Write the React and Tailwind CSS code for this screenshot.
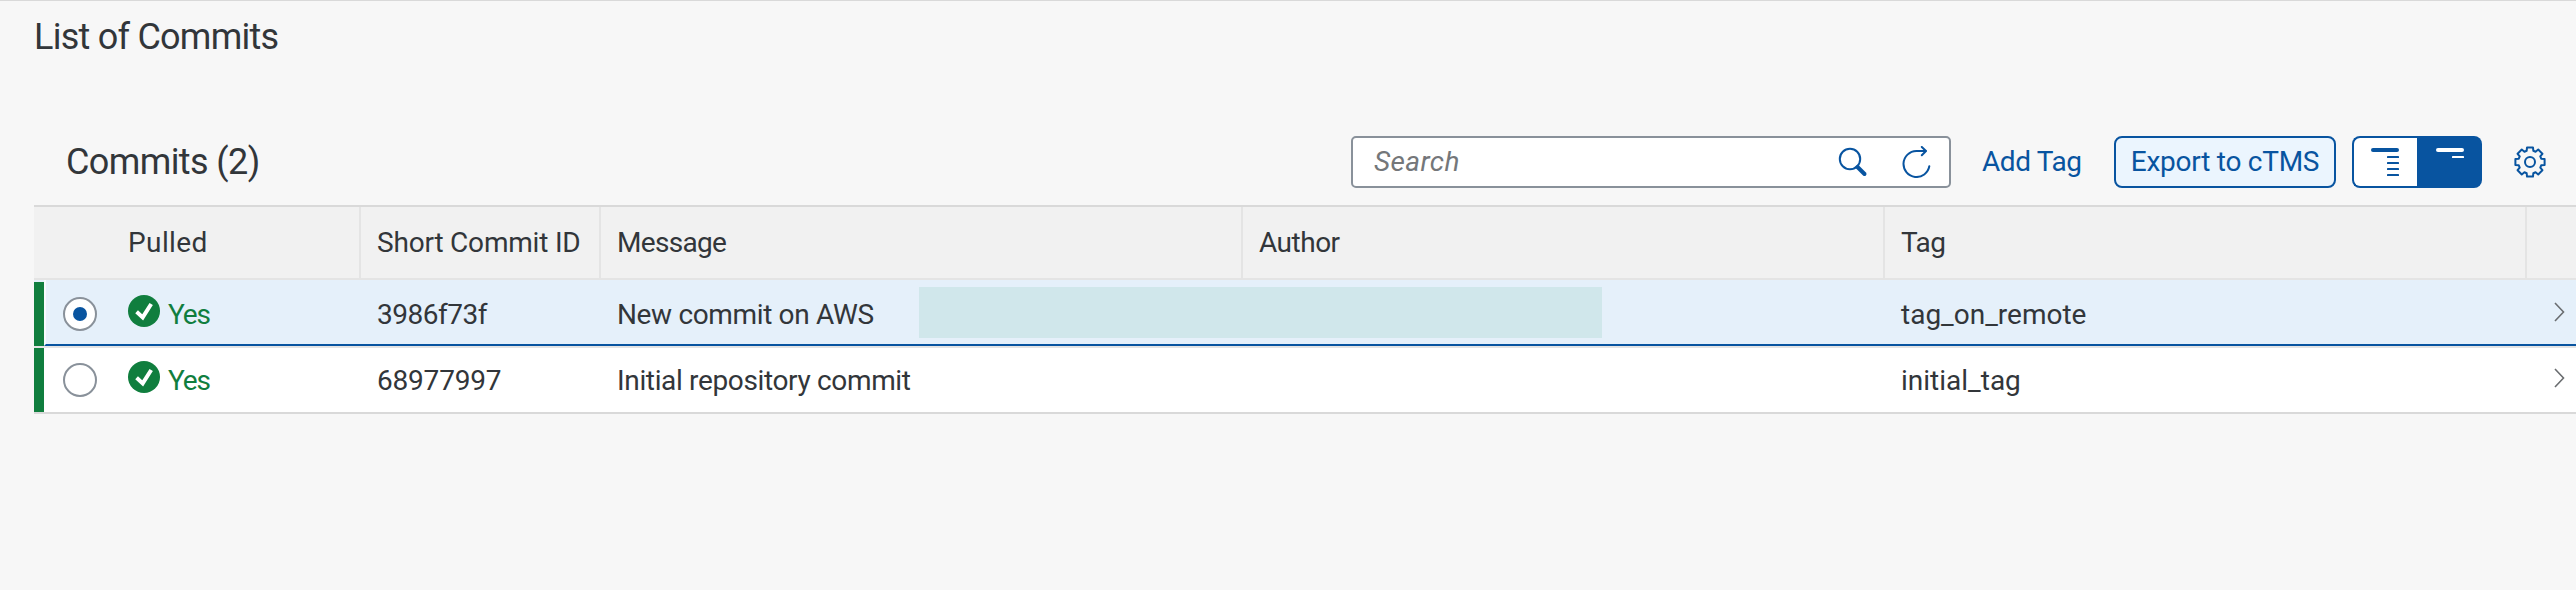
const COLUMNS =
  "grid grid-cols-[10px_68px_249px_240px_642px_642px_642px_49px] items-stretch";

const commits = [
  {
    id: "3986f73f",
    idTracking: "tracking-[-0.5px]",
    message: "New commit on AWS",
    tag: "tag_on_remote",
    selected: true,
  },
  {
    id: "68977997",
    idTracking: "tracking-[-0.2px]",
    message: "Initial repository commit",
    tag: "initial_tag",
    selected: false,
  },
];

function SearchIcon() {
  return (
    <svg className="size-8" viewBox="0 0 32 32" fill="none" stroke="#0854a0" strokeLinecap="round">
      <circle cx="14" cy="13" r="10.2" strokeWidth="2" />
      <path d="M21.5 21L28.5 28" strokeWidth="4" />
    </svg>
  );
}

function RefreshIcon() {
  return (
    <svg
      className="size-8"
      viewBox="0 0 32 32"
      fill="none"
      stroke="#0854a0"
      strokeWidth="2"
      strokeLinecap="round"
      strokeLinejoin="round"
    >
      <path d="M29.3 20.3A13 13 0 1 1 16.4 5H25.5" />
      <path d="M21.8 1L26 5L21.8 9.2" />
    </svg>
  );
}

function gearPath() {
  const points = [];
  for (let i = 0; i < 8; i += 1) {
    const base = (i * Math.PI) / 4;
    [
      [-0.29, 11.7],
      [-0.2, 14.9],
      [0.2, 14.9],
      [0.29, 11.7],
    ].forEach(([offset, radius]) => {
      const a = base + offset;
      points.push(`${(16 + radius * Math.sin(a)).toFixed(2)} ${(16 - radius * Math.cos(a)).toFixed(2)}`);
    });
  }
  return `M${points.join("L")}Z`;
}

function GearIcon() {
  return (
    <svg className="size-8" viewBox="0 0 32 32" fill="none" stroke="#0854a0" strokeWidth="2" strokeLinejoin="round">
      <path d={gearPath()} />
      <circle cx="16" cy="16" r="5" />
    </svg>
  );
}

function ExpandIcon() {
  return (
    <svg className="h-8 w-7" viewBox="0 0 28 32" fill="#0854a0">
      <rect x="0" y="2" width="28" height="4" rx="2" />
      <rect x="16" y="10" width="12" height="2" rx="0.6" />
      <rect x="16" y="16" width="12" height="2" rx="0.6" />
      <rect x="16" y="22" width="12" height="2" rx="0.6" />
      <rect x="16" y="28" width="12" height="2" rx="0.6" />
    </svg>
  );
}

function CollapseIcon() {
  return (
    <svg className="h-8 w-7" viewBox="0 0 28 32" fill="#fff">
      <rect x="0" y="2" width="28" height="4" rx="2" />
      <rect x="16" y="10" width="12" height="2" rx="0.6" />
    </svg>
  );
}

function AcceptIcon() {
  return (
    <svg className="mb-[7px] size-8" viewBox="0 0 32 32" fill="none">
      <circle cx="16" cy="16" r="16" fill="#107e3e" />
      <path d="M8.6 16.8L14.7 22.4L23.2 9" stroke="#fff" strokeWidth="4" />
    </svg>
  );
}

function ChevronIcon() {
  return (
    <svg className="mt-[-4px] h-5 w-[11px]" viewBox="0 0 11 20" fill="none" stroke="#6a6d70" strokeWidth="1.6">
      <path d="M1 1L9.5 10L1 19" />
    </svg>
  );
}

function Radio({ checked }) {
  return (
    <span className="flex size-[34px] items-center justify-center rounded-full border-2 border-[#89919a] bg-white">
      {checked && <span className="size-[14px] rounded-full bg-[#0854a0]" />}
    </span>
  );
}

function HeaderCell({ children, className = "" }) {
  return (
    <div className={`flex items-center border-r-2 border-[#e4e4e4] pl-4 whitespace-nowrap ${className}`}>
      {children}
    </div>
  );
}

function CommitRow({ commit }) {
  const { selected } = commit;
  return (
    <div
      className={`relative ${COLUMNS} ${
        selected ? "h-[68px] border-b-2 border-[#e4e4e4] bg-[#e5f0fa]" : "h-[66px] border-b-2 border-[#d9d9d9] bg-white"
      }`}
    >
      <div className={selected ? "mt-[2px] bg-[#107e3e]" : "bg-[#107e3e]"} />
      <div
        className={`flex items-center pl-[17px] ${
          selected ? "border-b-2 border-l-2 border-b-[#0854a0] border-l-[#f7fafd] pt-[4px]" : "border-l-2 border-transparent"
        }`}
      >
        <Radio checked={selected} />
      </div>
      {[
        <div key="pulled" className="flex items-center gap-2 pl-4 text-[#107e3e]">
          <AcceptIcon />
          <span className="pt-[2px] tracking-[-1.2px]">Yes</span>
        </div>,
        <div key="id" className={`flex items-center pt-[2px] pl-4 ${commit.idTracking}`}>{commit.id}</div>,
        <div key="message" className="flex items-center pt-[2px] pl-4 tracking-[-0.35px]">{commit.message}</div>,
        <div key="author" />,
        <div key="tag" className="flex items-center pt-[2px] pl-4 tracking-[0px]">{commit.tag}</div>,
        <div key="nav" className="flex items-center pl-[27px]"><ChevronIcon /></div>,
      ].map((cell) => (
        <div
          key={cell.key}
          className={`grid whitespace-nowrap ${selected ? "border-b-2 border-[#0854a0] pt-[4px]" : ""}`}
        >
          {cell}
        </div>
      ))}
      {selected && <div className="absolute top-[7px] left-[885px] h-[51px] w-[683px] bg-[#d0e7eb]" />}
    </div>
  );
}

export default function App() {
  return (
    <main className="h-[590px] w-[2576px] overflow-hidden border-t border-[#d9d9d9] bg-[#f7f7f7] pl-[34px] font-['Roboto','Noto_Sans',sans-serif] text-[28px] font-[450] text-[#32363a]">
      <h1 className="mt-[14px] h-11 text-[36px] leading-[44px] tracking-[-0.75px]">List of Commits</h1>

      <section>
        <div className="mt-[77px] flex h-[52px] items-center pr-[30px] pl-8">
          <h2 className="text-[36px] leading-[44px] tracking-[-0.6px]">Commits (2)</h2>
          <div className="ml-auto flex h-[52px] items-center text-[#0854a0]">
            <div className="flex h-[52px] w-[600px] items-center rounded-[5px] border-2 border-[#89919a] bg-white pr-[17px] pl-[21px]">
              <span className="mr-auto tracking-[0.4px] text-[#74777a] italic">Search</span>
              <SearchIcon />
              <div className="ml-8">
                <RefreshIcon />
              </div>
            </div>
            <button className="ml-[31px] w-[100px] text-left tracking-[-0.4px] whitespace-nowrap">Add Tag</button>
            <button className="ml-8 h-[52px] w-[222px] rounded-[8px] border-2 border-[#0854a0] bg-[#ebf5fe] tracking-[-0.25px] whitespace-nowrap">
              Export to cTMS
            </button>
            <div className="ml-4 flex h-[52px] w-[130px]">
              <button className="flex w-[65px] items-center rounded-l-[8px] border-2 border-r-0 border-[#0854a0] bg-white pl-[17px]">
                <ExpandIcon />
              </button>
              <button className="flex w-[65px] items-center justify-center rounded-r-[8px] bg-[#0854a0]">
                <CollapseIcon />
              </button>
            </div>
            <div className="ml-8">
              <GearIcon />
            </div>
          </div>
        </div>

        <div className="mt-[17px] w-[2542px] border-t-2 border-[#d9d9d9]">
          <div className={`h-[73px] border-b-2 border-[#e4e4e4] bg-[#f1f1f1] ${COLUMNS}`}>
            <div />
            <div />
            <HeaderCell className="tracking-[0.4px]">Pulled</HeaderCell>
            <HeaderCell className="tracking-[-0.2px]">Short Commit ID</HeaderCell>
            <HeaderCell className="tracking-[-0.7px]">Message</HeaderCell>
            <HeaderCell className="tracking-[-0.5px]">Author</HeaderCell>
            <HeaderCell className="tracking-[-0.6px]">Tag</HeaderCell>
            <div />
          </div>
          {commits.map((commit) => (
            <CommitRow key={commit.id} commit={commit} />
          ))}
        </div>
      </section>
    </main>
  );
}
